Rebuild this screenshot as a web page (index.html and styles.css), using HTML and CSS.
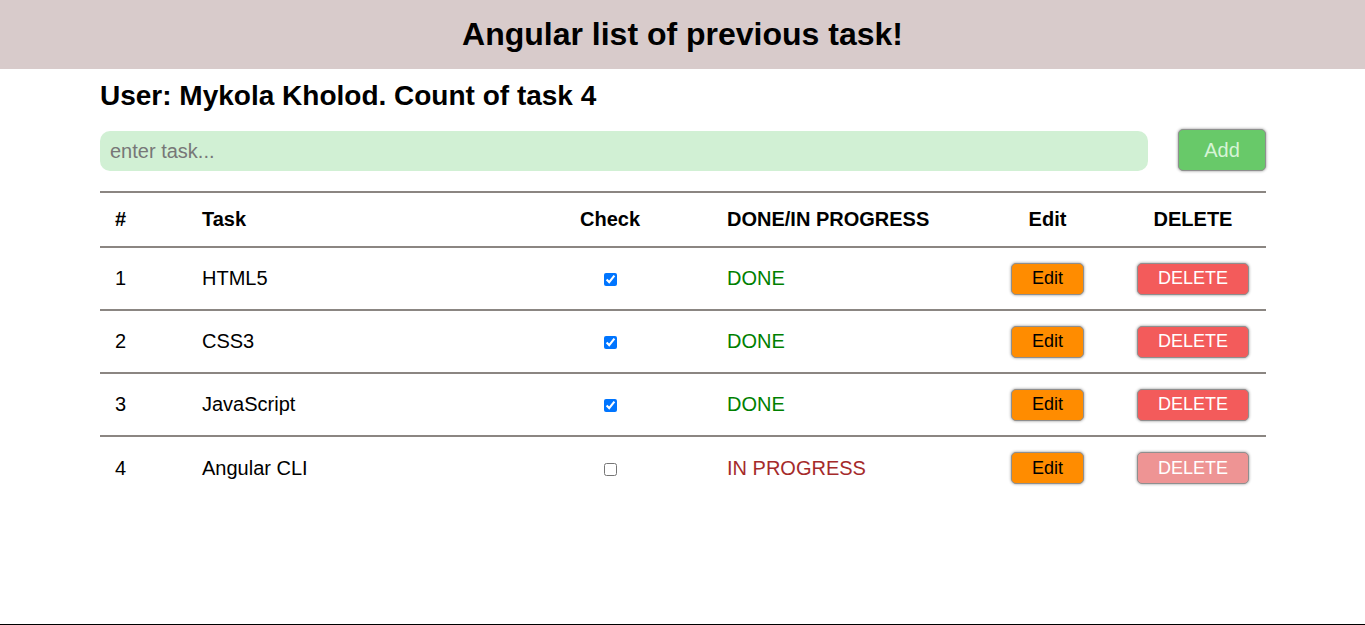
FILE: index.html
```html
<!DOCTYPE html>
<html lang="en">
<head>
<meta charset="utf-8">
<title>Angular list of previous task!</title>
<link rel="stylesheet" href="styles.css">
</head>
<body>
<div class="page">
  <header class="top">
    <h1 class="title">Angular list of previous task!</h1>
  </header>
  <main class="container">
    <h2 class="user">User: Mykola Kholod. Count of task 4</h2>
    <div class="add-row">
      <input class="task-input" type="text" placeholder="enter task...">
      <button class="btn btn-add">Add</button>
    </div>
    <table class="tasks">
      <colgroup>
        <col class="c-num"><col class="c-task"><col class="c-check"><col class="c-status"><col class="c-edit"><col class="c-del">
      </colgroup>
      <thead>
        <tr>
          <th class="left">#</th>
          <th class="left">Task</th>
          <th>Check</th>
          <th class="left">DONE/IN PROGRESS</th>
          <th>Edit</th>
          <th>DELETE</th>
        </tr>
      </thead>
      <tbody>
        <tr>
          <td class="left">1</td>
          <td class="left">HTML5</td>
          <td><input type="checkbox" checked></td>
          <td class="left done">DONE</td>
          <td><button class="btn btn-edit">Edit</button></td>
          <td><button class="btn btn-del">DELETE</button></td>
        </tr>
        <tr>
          <td class="left">2</td>
          <td class="left">CSS3</td>
          <td><input type="checkbox" checked></td>
          <td class="left done">DONE</td>
          <td><button class="btn btn-edit">Edit</button></td>
          <td><button class="btn btn-del">DELETE</button></td>
        </tr>
        <tr>
          <td class="left">3</td>
          <td class="left">JavaScript</td>
          <td><input type="checkbox" checked></td>
          <td class="left done">DONE</td>
          <td><button class="btn btn-edit">Edit</button></td>
          <td><button class="btn btn-del">DELETE</button></td>
        </tr>
        <tr>
          <td class="left">4</td>
          <td class="left">Angular CLI</td>
          <td><input type="checkbox"></td>
          <td class="left progress">IN PROGRESS</td>
          <td><button class="btn btn-edit">Edit</button></td>
          <td><button class="btn btn-del" disabled>DELETE</button></td>
        </tr>
      </tbody>
    </table>
  </main>
  <footer class="bottom"></footer>
</div>
</body>
</html>
```

FILE: styles.css
```css
* { box-sizing: border-box; }
html, body { margin: 0; padding: 0; }
body {
  font-family: "Liberation Sans", Arial, sans-serif;
  color: #000;
  background: #fff;
}
.page {
  min-height: 100vh;
  display: flex;
  flex-direction: column;
}
.top {
  background: #d8cbcb;
  padding: 16px 0;
}
.title {
  margin: 0;
  font-size: 32px;
  line-height: 37px;
  font-weight: bold;
  text-align: center;
}
.container {
  margin: 0 99px 0 100px;
}
.user {
  margin: 11px 0 0;
  font-size: 28px;
  line-height: 32px;
  font-weight: bold;
}
.add-row {
  margin-top: 17px;
  display: flex;
  align-items: center;
  gap: 30px;
  height: 42px;
}
.task-input {
  flex: 1;
  height: 40px;
  margin-top: 2px;
  border: none;
  border-radius: 10px;
  background: #d1f0d4;
  padding: 0 10px;
  font-family: "Liberation Sans", Arial, sans-serif;
  font-size: 20px;
  outline: none;
}
.task-input::placeholder { color: #777; }
.btn {
  font-family: "Liberation Sans", Arial, sans-serif;
  border: 1px solid #8f8f8f;
  border-radius: 5px;
  box-shadow: 0 0 3px rgba(0,0,0,0.45);
  padding: 0;
  cursor: pointer;
}
.btn-add {
  width: 88px;
  height: 42px;
  background: #68c969;
  color: #d6f4d6;
  font-size: 20px;
}
.tasks {
  margin-top: 20px;
  width: 100%;
  border-collapse: collapse;
  table-layout: fixed;
  border-top: 2px solid #8b8682;
}
.c-num { width: 87px; }
.c-task { width: 321px; }
.c-check { width: 204px; }
.c-status { width: 263px; }
.c-edit { width: 145px; }
.c-del { width: 146px; }
.tasks th, .tasks td {
  padding: 0 15px;
  text-align: center;
  vertical-align: middle;
  font-size: 20px;
}
.tasks th {
  height: 55px;
  font-weight: bold;
}
.tasks td { height: 63px; }
.tasks .left { text-align: left; }
.tasks thead tr, .tasks tbody tr { border-bottom: 2px solid #8b8682; }
.tasks tbody tr:last-child { border-bottom: none; }
.tasks input[type="checkbox"] { margin: 0; width: 13px; height: 13px; vertical-align: middle; }
.done { color: #008000; }
.progress { color: #a52a2a; }
.btn-edit {
  width: 73px;
  height: 32px;
  background: #ff8c00;
  color: #000;
  font-size: 18px;
}
.btn-del {
  width: 112px;
  height: 32px;
  background: #f35b5b;
  color: #fff;
  font-size: 18px;
}
.btn-del:disabled {
  background: #ee9494;
  color: #fff;
  cursor: default;
}
.bottom {
  margin-top: auto;
  height: 1px;
  background: #000;
}
```
